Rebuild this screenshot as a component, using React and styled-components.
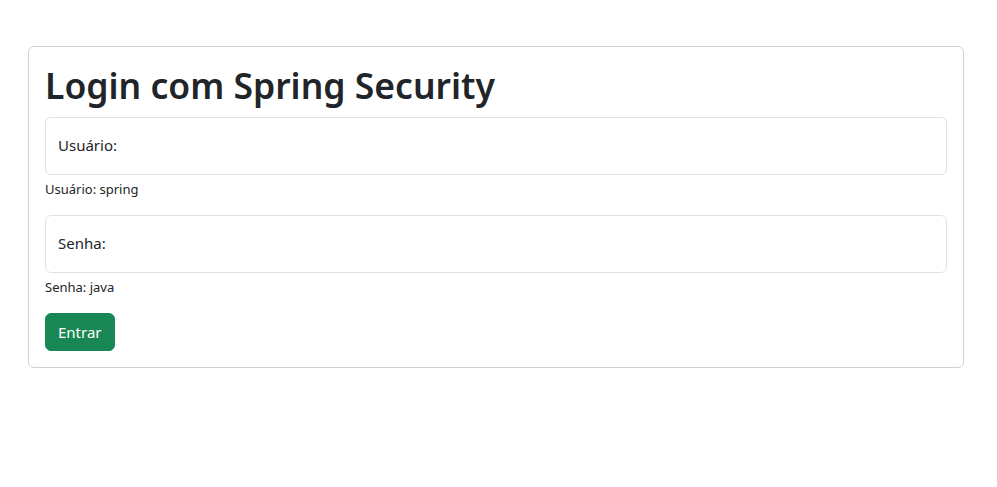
import styled, { createGlobalStyle } from "styled-components";

const GlobalStyle = createGlobalStyle`
  body {
    margin: 0;
    background: #fff;
    color: #212529;
    font-family: "Noto Sans", "Open Sans", sans-serif;
    font-size: 15px;
    line-height: 24px;
  }
  * { box-sizing: border-box; }
`;

const FIELDS = [
  { name: "username", label: "Usuário:", help: "Usuário: spring", type: "text" },
  { name: "password", label: "Senha:", help: "Senha: java", type: "password" },
];

export default function App() {
  return (
    <>
      <GlobalStyle />
      <Page>
        <Card>
          <Title>Login com Spring Security</Title>
          <form onSubmit={(e) => e.preventDefault()}>
            {FIELDS.map((f) => (
              <Group key={f.name}>
                <Floating>
                  <Input id={f.name} name={f.name} type={f.type} />
                  <Label htmlFor={f.name}>{f.label}</Label>
                </Floating>
                <Help>{f.help}</Help>
              </Group>
            ))}
            <Button type="submit">Entrar</Button>
          </form>
        </Card>
      </Page>
    </>
  );
}

const Page = styled.div`
  padding: 46px 0 0 28px;
`;

const Card = styled.div`
  width: 936px;
  padding: 16px;
  border: 1px solid rgba(0, 0, 0, 0.175);
  border-radius: 6px;
`;

const Title = styled.h1`
  margin: 0 0 10px;
  font-size: 35.5px;
  font-weight: 600;
  line-height: 44px;
`;

const Group = styled.div`
  margin-bottom: 16px;
`;

const Floating = styled.div`
  position: relative;
`;

const Input = styled.input`
  display: block;
  width: 100%;
  height: 58px;
  padding: 16px 12px;
  border: 1px solid #dee2e6;
  border-radius: 6px;
  font: inherit;
  color: #212529;
  background: #fff;
  outline: none;
`;

const Label = styled.label`
  position: absolute;
  top: 0;
  left: 0;
  padding: 16px 13px;
  line-height: 24px;
  pointer-events: none;
`;

const Help = styled.div`
  margin-top: 4px;
  font-size: 13px;
  line-height: 20px;
`;

const Button = styled.button`
  height: 38px;
  padding: 6px 12px;
  border: 1px solid #198754;
  border-radius: 6px;
  background: #198754;
  color: #fff;
  font: inherit;
  cursor: pointer;
`;
